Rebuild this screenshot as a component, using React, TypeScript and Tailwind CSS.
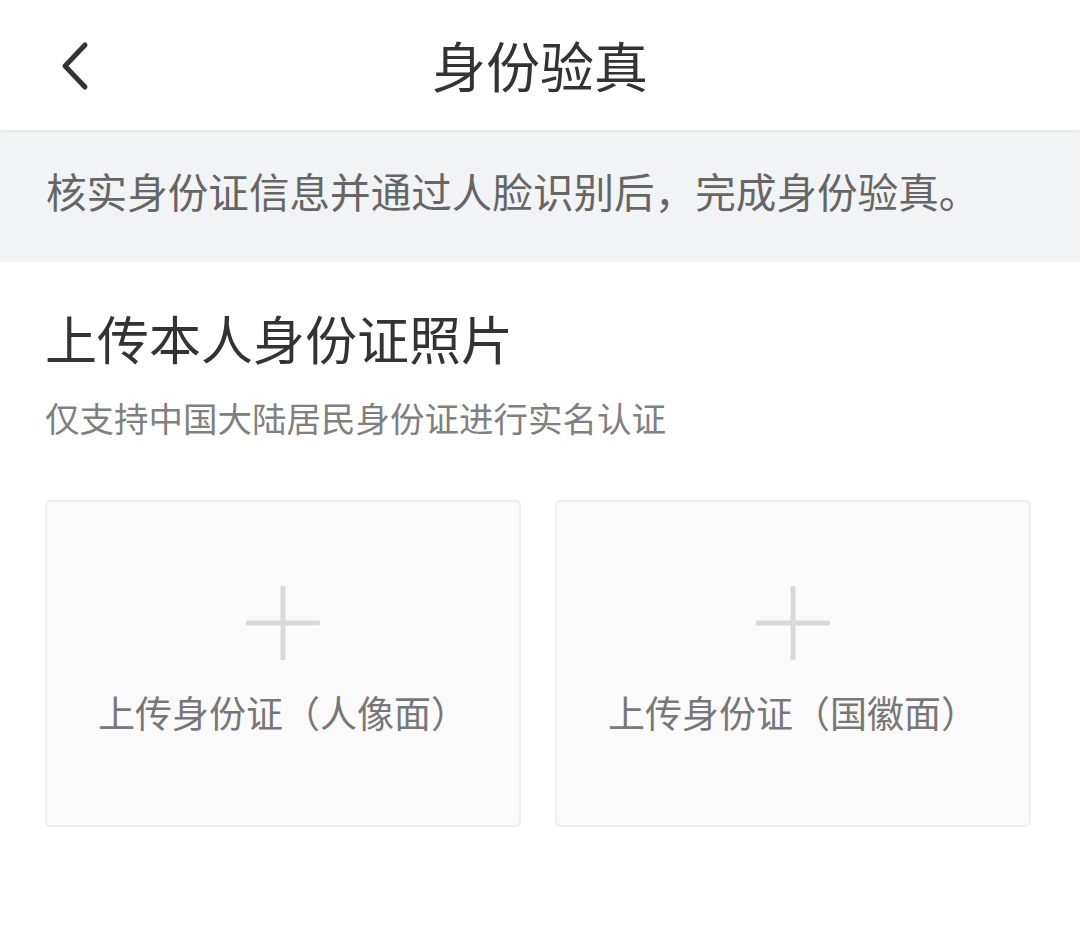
import React from 'react';

const font = { fontFamily: '"Noto Sans CJK SC", "Noto Sans", sans-serif' };

const UploadCard = ({ label }: { label: string }) => (
  <div className="flex h-[327px] flex-1 flex-col items-center rounded-[5px] border-2 border-[#efefef] bg-[#fafafa]">
    <svg width="74" height="74" viewBox="0 0 74 74" className="mt-[84px]">
      <path d="M37 2 V72 M2 37 H72" stroke="#d9d9d9" strokeWidth="5" strokeLinecap="round" fill="none" />
    </svg>
    <div className="mt-[34px] text-[37px] leading-none text-[#777]">{label}</div>
  </div>
);

export default function App() {
  return (
    <div className="min-h-[943px] w-[1080px] bg-white" style={font}>
      {/* Header */}
      <div className="relative z-10 flex h-[130px] items-center justify-center bg-white shadow-[0_2px_3px_rgba(0,0,0,0.05)]">
        <button className="absolute left-[58px] top-[40px]">
          <svg width="34" height="52" viewBox="0 0 34 52">
            <path d="M27 5 L7 26 L27 47" stroke="#333" strokeWidth="5" fill="none" strokeLinecap="round" strokeLinejoin="round" />
          </svg>
        </button>
        <h1 className="text-[54px] leading-none text-[#333]">身份验真</h1>
      </div>

      {/* Notice */}
      <div className="flex h-[132px] items-center bg-[#f2f3f5] px-[46px] pb-[10px]">
        <p className="text-[40.6px] leading-none text-[#666]">核实身份证信息并通过人脸识别后，完成身份验真。</p>
      </div>

      {/* Upload section */}
      <div className="pl-[45px] pr-[49px]">
        <h2 className="mt-[50px] text-[52px] leading-none text-[#333]">上传本人身份证照片</h2>
        <p className="mt-[36px] text-[34.5px] leading-none text-[#808080]">仅支持中国大陆居民身份证进行实名认证</p>
        <div className="mt-[65px] flex gap-[34px]">
          <UploadCard label="上传身份证（人像面）" />
          <UploadCard label="上传身份证（国徽面）" />
        </div>
      </div>
    </div>
  );
}
